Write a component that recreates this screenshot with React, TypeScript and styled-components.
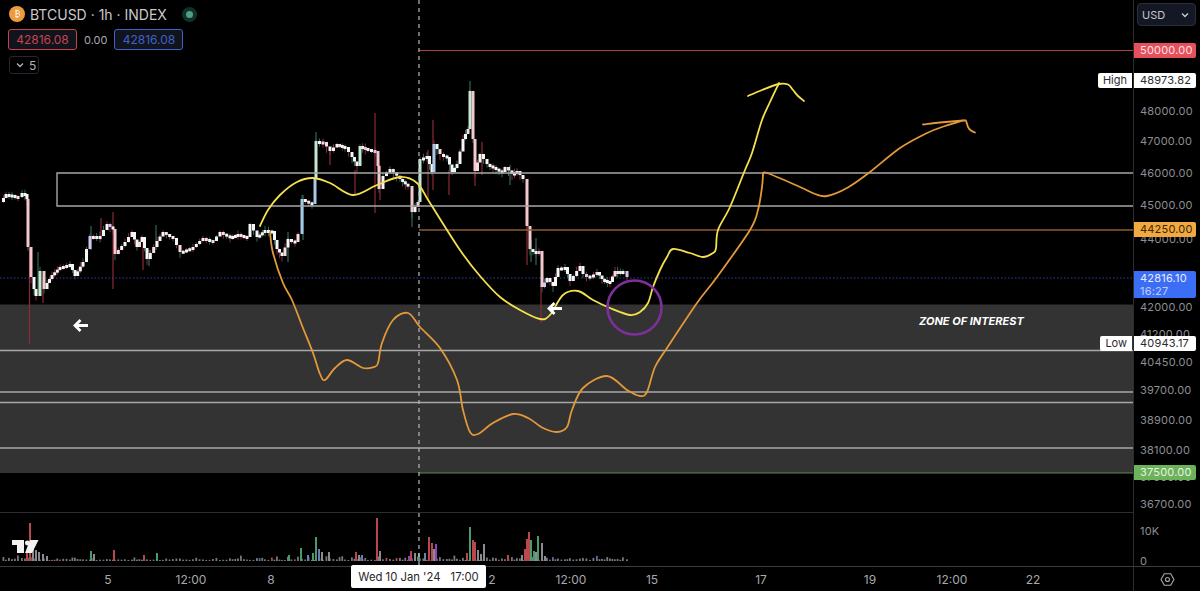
import styled, { createGlobalStyle } from "styled-components";

const CHART_W = 1133;
const MAIN_H = 512;

const GlobalStyle = createGlobalStyle`
  html, body {
    margin: 0;
    padding: 0;
    background: #000;
    overflow: hidden;
  }
  #root {
    width: 1200px;
    height: 591px;
  }
`;

const Screen = styled.div`
  display: flex;
  width: 1200px;
  height: 591px;
  background: #000;
  color: #d1d4dc;
  font-family: Inter, "Liberation Sans", sans-serif;
`;

const ChartColumn = styled.div`
  display: flex;
  flex-direction: column;
  width: ${CHART_W}px;
`;

const MainPane = styled.div`
  position: relative;
  height: ${MAIN_H}px;
  svg {
    display: block;
  }
`;

const VolumePane = styled.div`
  height: 53px;
  border-top: 1px solid #2c2c32;
  svg {
    display: block;
  }
`;

const TimeAxis = styled.div`
  position: relative;
  height: 24px;
  border-top: 1px solid #3a3a40;
`;

const TimeLabel = styled.span`
  position: absolute;
  top: 5px;
  transform: translateX(-50%);
  font-size: 12px;
  line-height: 15px;
  color: #a8a8ac;
  white-space: nowrap;
`;

const TimeTooltip = styled.div`
  position: absolute;
  left: 351px;
  top: -2px;
  width: 135px;
  height: 23px;
  display: flex;
  align-items: center;
  justify-content: center;
  gap: 10px;
  background: #fff;
  border-radius: 2px;
  color: #26262a;
  font-size: 11.3px;
`;

const Legend = styled.div`
  position: absolute;
  left: 8px;
  top: 5px;
  display: flex;
  flex-direction: column;
  align-items: flex-start;
  gap: 6px;
`;

const LegendTitle = styled.div`
  display: flex;
  align-items: center;
  height: 18px;
  font-size: 14px;
  color: #c9c9cc;
  white-space: nowrap;
  svg {
    margin: 0 5px 0 1px;
  }
`;

const StatusDot = styled.span`
  width: 7px;
  height: 7px;
  margin-left: 19px;
  border-radius: 50%;
  background: #4f9f87;
  box-shadow: 0 0 0 4px #10302a;
`;

const ValueRow = styled.div`
  display: flex;
  align-items: center;
  gap: 7px;
`;

const ValueBox = styled.span<{ $tone: string }>`
  display: block;
  box-sizing: border-box;
  width: 69px;
  height: 21px;
  line-height: 19px;
  text-align: center;
  font-size: 12px;
  color: ${p => p.$tone};
  border: 1px solid ${p => p.$tone};
  border-radius: 3px;
  background: #12141d;
`;

const ChangeText = styled.span`
  font-size: 11px;
  color: #a9a9ae;
`;

const CollapseButton = styled.div`
  display: flex;
  align-items: center;
  gap: 4px;
  box-sizing: border-box;
  width: 30px;
  height: 18px;
  margin-left: 1px;
  padding-left: 5px;
  border: 1px solid #26262c;
  border-radius: 3px;
  font-size: 12px;
  color: #b0b0b4;
`;

const ExtremeTag = styled.span`
  position: absolute;
  right: 1px;
  height: 15px;
  padding: 0 5px;
  line-height: 15px;
  font-size: 11px;
  color: #2a2a2e;
  background: #fff;
  border-radius: 2px 0 0 2px;
`;

const ZoneLabel = styled.span`
  position: absolute;
  left: 919px;
  top: 315px;
  font-size: 11px;
  line-height: 13px;
  font-weight: 700;
  font-style: italic;
  color: #fff;
  white-space: nowrap;
`;

const PriceAxis = styled.div`
  position: relative;
  width: 66px;
  border-left: 1px solid #2c2c32;
`;

const CurrencySelect = styled.div`
  position: absolute;
  left: 3px;
  top: 3px;
  box-sizing: border-box;
  display: flex;
  align-items: center;
  justify-content: space-between;
  width: 59px;
  height: 23px;
  padding: 0 5px 0 4px;
  border: 1px solid #2a2e39;
  border-radius: 4px;
  background: #141824;
  font-size: 11px;
  color: #c4c6cc;
`;

const PriceLabel = styled.span`
  position: absolute;
  left: 6px;
  transform: translateY(-50%);
  font-size: 11px;
  line-height: 14px;
  letter-spacing: 0.2px;
  color: #8e8e92;
`;

const PriceBadge = styled.div<{ $bg: string; $fg: string }>`
  position: absolute;
  left: 0;
  box-sizing: border-box;
  width: 62px;
  padding-left: 6px;
  font-size: 11px;
  line-height: 14px;
  letter-spacing: 0.2px;
  color: ${p => p.$fg};
  background: ${p => p.$bg};
  border-radius: 0 2px 2px 0;
`;

const BadgeLine = styled.div<{ $dim?: boolean }>`
  height: 13px;
  line-height: 14px;
  opacity: ${p => (p.$dim ? 0.75 : 1)};
`;

const SettingsButton = styled.div`
  position: absolute;
  left: 0;
  right: 0;
  bottom: 0;
  height: 24px;
  display: flex;
  align-items: center;
  justify-content: center;
  border-top: 1px solid #3a3a40;
`;

type Pt = [number, number];

// price path read off the picture, one point per visible turn
const pricePath: Pt[] = [
  [1, 203], [6, 195], [12, 196], [18, 198], [22, 194], [25, 195], [27, 200], [28, 248], [31, 278], [34, 290], [36, 297],
  [40, 272], [44, 290], [47, 284], [52, 276], [60, 268], [70, 265], [75, 277], [83, 263], [90, 237], [100, 237],
  [107, 225], [113, 230], [115, 255], [125, 243], [132, 233], [137, 248], [142, 238], [147, 260], [157, 242], [163, 233],
  [173, 239], [180, 253], [193, 248], [203, 239], [213, 242], [220, 233], [230, 238], [238, 235], [247, 238], [250, 225],
  [257, 238], [265, 231], [272, 232], [277, 250], [282, 257], [288, 240], [295, 243], [298, 235], [302, 200], [312, 205],
  [315, 180], [316, 142], [323, 143], [330, 152], [337, 145], [345, 148], [352, 158], [357, 167], [360, 147], [368, 150],
  [375, 152], [378, 167], [379, 190], [383, 177], [390, 170], [400, 180], [408, 187], [412, 213], [418, 203], [420, 160],
  [427, 157], [432, 173], [434, 145], [440, 155], [447, 158], [452, 173], [457, 165], [463, 140], [468, 130], [470, 92],
  [473, 140], [475, 172], [480, 155], [487, 165], [493, 168], [502, 173], [505, 168], [512, 175], [517, 172], [523, 180],
  [527, 227], [530, 250], [533, 252], [539, 252], [542, 288], [547, 279], [553, 287], [558, 269], [565, 268], [570, 282],
  [580, 267], [583, 275], [590, 278], [597, 273], [602, 280], [610, 283], [615, 272], [623, 272], [627, 278],
];

const STEP = 3.2;

type Candle = { x: number; open: number; close: number };

// split each stretch of the path into candles, so every turn lands on a candle
const candles: Candle[] = [];
for (let i = 1; i < pricePath.length; i++) {
  const [x0, y0] = pricePath[i - 1];
  const [x1, y1] = pricePath[i];
  const n = Math.max(1, Math.round((x1 - x0) / STEP));
  for (let k = 1; k <= n; k++) {
    candles.push({
      x: x0 + ((x1 - x0) * k) / n,
      open: y0 + ((y1 - y0) * (k - 1)) / n,
      close: y0 + ((y1 - y0) * k) / n,
    });
  }
}

const noise = (i: number) => {
  const v = Math.sin(i * 12.9898) * 43758.5453;
  return v - Math.floor(v);
};

const RED_WICK = "#8c2b36";
const GREEN_WICK = "#2e6b52";

const bigWicks: [number, number, number, string][] = [
  [29.5, 248, 344, RED_WICK], [38, 252, 296, GREEN_WICK], [43, 280, 303, RED_WICK], [113, 212, 289, RED_WICK],
  [101, 218, 240, RED_WICK], [156, 225, 250, GREEN_WICK], [143, 240, 270, RED_WICK], [149, 250, 266, GREEN_WICK],
  [91, 226, 250, GREEN_WICK], [316, 132, 150, GREEN_WICK], [375, 113, 213, RED_WICK], [355, 170, 195, RED_WICK],
  [330, 150, 165, RED_WICK], [412, 205, 227, GREEN_WICK], [433, 120, 190, RED_WICK], [428, 150, 200, RED_WICK],
  [470, 81, 95, GREEN_WICK], [475, 140, 186, RED_WICK], [482, 142, 175, RED_WICK], [449, 170, 195, RED_WICK],
  [541, 285, 323, RED_WICK], [531, 240, 262, GREEN_WICK], [536, 238, 265, GREEN_WICK], [527, 225, 265, RED_WICK],
  [303, 195, 240, GREEN_WICK], [288, 232, 262, GREEN_WICK], [510, 165, 185, GREEN_WICK], [380, 165, 200, RED_WICK],
];

const bodyColor = (c: Candle, i: number) => {
  const move = c.open - c.close;
  if (move > 14) return i % 2 ? "#c4e8d2" : "#a8c8e8";
  if (move < -14) return "#f3c9cd";
  if (noise(i) > 0.95) return "#d9c4ef";
  if (noise(i + 50) > 0.85) return "#f6dcdf";
  return "#f6f6f6";
};

const Candles = () => (
  <g>
    {candles.map((c, i) => {
      const h = 2 + noise(i + 3) * 3.5;
      return (
        <line
          key={i}
          x1={c.x}
          x2={c.x}
          y1={c.close - h}
          y2={c.close + h}
          stroke={noise(i + 7) > 0.5 ? GREEN_WICK : RED_WICK}
          strokeWidth={1}
        />
      );
    })}
    {bigWicks.map(([x, y0, y1, color]) => (
      <line key={`${x}-${y0}`} x1={x} x2={x} y1={y0} y2={y1} stroke={color} strokeWidth={1.2} />
    ))}
    {candles.map((c, i) => (
      <rect
        key={i}
        x={c.x - 1.5}
        y={Math.min(c.open, c.close) - 1}
        width={3}
        height={Math.max(Math.abs(c.open - c.close), 3)}
        fill={bodyColor(c, i)}
      />
    ))}
  </g>
);

// smooth line through hand-drawn points (Catmull-Rom to bezier)
const smoothPath = (pts: Pt[]) => {
  let d = `M${pts[0][0]} ${pts[0][1]}`;
  for (let i = 0; i < pts.length - 1; i++) {
    const p0 = pts[Math.max(0, i - 1)];
    const p1 = pts[i];
    const p2 = pts[i + 1];
    const p3 = pts[Math.min(pts.length - 1, i + 2)];
    const c1x = p1[0] + (p2[0] - p0[0]) / 6;
    const c1y = p1[1] + (p2[1] - p0[1]) / 6;
    const c2x = p2[0] - (p3[0] - p1[0]) / 6;
    const c2y = p2[1] - (p3[1] - p1[1]) / 6;
    d += ` C${c1x.toFixed(1)} ${c1y.toFixed(1)} ${c2x.toFixed(1)} ${c2y.toFixed(1)} ${p2[0]} ${p2[1]}`;
  }
  return d;
};

const yellowCurve = smoothPath([
  [260, 226], [268, 210], [280, 195], [297, 182], [313, 178], [330, 183], [353, 195], [377, 185], [400, 177], [417, 183],
  [430, 203], [460, 250], [480, 276], [500, 297], [520, 310], [540, 319], [550, 315], [563, 295], [578, 291], [593, 300],
  [610, 308], [630, 315], [640, 312], [648, 303], [653, 287], [660, 270], [667, 257], [673, 249], [690, 253], [703, 257],
  [713, 253], [716, 248], [718, 230], [730, 207], [745, 170], [752, 153], [762, 120], [770, 102], [779, 83],
]);

const yellowHead = smoothPath([[748, 96], [762, 90], [779, 84], [788, 84.5], [793, 90], [798, 96], [804, 101]]);

const orangeLeg = smoothPath([
  [270, 232], [273, 253], [283, 283], [292, 300], [303, 328], [313, 353], [320, 374], [325, 380], [335, 368], [347, 360],
  [363, 368], [374, 367], [378, 363], [382, 343], [393, 320], [408, 313], [420, 327], [440, 348], [457, 380], [463, 410],
  [470, 432], [478, 434], [493, 423], [513, 414], [528, 418], [543, 428], [557, 432], [567, 427], [572, 410], [583, 388],
  [607, 376], [627, 390], [640, 396], [647, 392], [655, 367], [667, 348], [697, 303], [717, 277], [750, 230], [758, 210],
  [762, 187], [763, 175],
]);

const orangeRun = smoothPath([
  [763, 175], [767, 173], [800, 187], [815, 194], [827, 196], [847, 188], [870, 172], [900, 148], [927, 133], [945, 126], [963, 120.5],
]);

const orangeHead = smoothPath([[923, 124.5], [940, 122.5], [963, 120.5], [966, 121], [968, 127], [971, 130.5], [975, 132.5]]);

const ArrowLeft = ({ x, y }: { x: number; y: number }) => (
  <path
    d={`M${x + 7} ${y}H${x - 6}M${x - 0.5} ${y - 5.5}L${x - 6} ${y}L${x - 0.5} ${y + 5.5}`}
    fill="none"
    stroke="#fff"
    strokeWidth={2.8}
  />
);

const Crosshair = ({ y2 }: { y2: number }) => (
  <line x1={419} x2={419} y1={0} y2={y2} stroke="#b8b8bc" strokeWidth={1.2} strokeDasharray="4 4" />
);

const ChartDrawing = () => (
  <svg width={CHART_W} height={MAIN_H}>
    <rect x={0} y={304.5} width={CHART_W} height={168.5} fill="#333333" />
    <line x1={0} x2={CHART_W} y1={278} y2={278} stroke="#2f45a0" strokeWidth={1} strokeDasharray="1.5 2" />
    <Candles />
    <path d={`M${CHART_W} 173H57V206H${CHART_W}`} fill="none" stroke="#a6a6a6" strokeWidth={1.4} />
    {[350.5, 392, 402.5, 448].map(y => (
      <line key={y} x1={0} x2={CHART_W} y1={y} y2={y} stroke="#a9a9a9" strokeWidth={1.4} />
    ))}
    <line x1={419} x2={CHART_W} y1={50.5} y2={50.5} stroke="#a8434b" strokeWidth={1.2} />
    <line x1={419} x2={CHART_W} y1={230} y2={230} stroke="#8d5c30" strokeWidth={1.4} />
    <line x1={419} x2={CHART_W} y1={473} y2={473} stroke="#5a8a50" strokeWidth={1.2} />
    <Crosshair y2={MAIN_H} />
    {[orangeLeg, orangeRun, orangeHead].map(d => (
      <path key={d} d={d} fill="none" stroke="#e3983a" strokeWidth={1.8} strokeLinecap="round" />
    ))}
    {[yellowCurve, yellowHead].map(d => (
      <path key={d} d={d} fill="none" stroke="#f4e04d" strokeWidth={1.8} strokeLinecap="round" />
    ))}
    <circle cx={634.5} cy={307.5} r={27} fill="none" stroke="#7d2f9c" strokeWidth={2.6} />
    <ArrowLeft x={81} y={325.5} />
    <ArrowLeft x={555} y={308.5} />
  </svg>
);

const VOL_BASE = 48;

// tall bars read off the picture: x, top in screen px, colour
const volumeSpikes: [number, number, string][] = [
  [29, 523, "#b8484d"], [26, 552, "#b8484d"], [32, 549, "#8a8a90"], [35, 550, "#8a8a90"], [38, 552, "#8a8a90"],
  [42, 554, "#8a8a90"], [46, 556, "#8a8a90"], [90, 551, "#4c9a6a"], [93, 554, "#8a8a90"], [113, 550, "#b8484d"],
  [143, 555, "#b8484d"], [156, 553, "#4c9a6a"], [288, 555, "#4c9a6a"], [300, 548, "#4c9a6a"], [307, 555, "#6a7fb0"],
  [312, 553, "#4c9a6a"], [315, 537, "#4c9a6a"], [318, 549, "#6a7fb0"], [321, 552, "#8a8a90"], [328, 552, "#8a8a90"],
  [355, 552, "#b8484d"], [358, 555, "#8a8a90"], [361, 555, "#6a7fb0"], [376, 518, "#b8484d"], [379, 551, "#8a8a90"],
  [408, 556, "#8b44b0"], [410, 551, "#b8484d"], [414, 553, "#8a8a90"], [418, 553, "#4c9a6a"], [424, 553, "#6a7fb0"],
  [428, 537, "#b8484d"], [431, 543, "#b8484d"], [433, 549, "#8a8a90"], [435, 544, "#8b44b0"], [466, 553, "#b8484d"],
  [469, 527, "#4c9a6a"], [472, 540, "#b8484d"], [474, 542, "#b8484d"], [477, 550, "#8a8a90"], [480, 554, "#8a8a90"],
  [483, 544, "#8a8a90"], [507, 555, "#b8484d"], [521, 555, "#8a8a90"], [524, 549, "#b8484d"], [526, 539, "#b8484d"],
  [528, 532, "#b8484d"], [530, 540, "#4c9a6a"], [533, 551, "#4c9a6a"], [535, 552, "#8a8a90"], [537, 536, "#4c9a6a"],
  [541, 543, "#8a8a90"], [544, 556, "#8a8a90"],
];

const volumeColor = (i: number) => {
  const n = noise(i + 21);
  if (n > 0.95) return "#4c9a6a";
  if (n > 0.9) return "#b8484d";
  if (n > 0.85) return "#5a6fa5";
  return "#77777c";
};

const VolumeDrawing = () => (
  <svg width={CHART_W} height={53}>
    {candles.map((c, i) => {
      const h = 1 + noise(i + 11) * noise(i + 31) * 5;
      return <rect key={i} x={c.x - 1} y={VOL_BASE - h} width={1.8} height={h} fill={volumeColor(i)} />;
    })}
    {volumeSpikes.map(([x, top, color]) => (
      <rect key={x} x={x} y={top - 513} width={2} height={VOL_BASE - (top - 513)} fill={color} />
    ))}
    <Crosshair y2={53} />
    <path d="M12 27H24V40H17V32H12ZM30 27H38.5L32 40H25Z" fill="#f2f2f2" />
    <circle cx={27.3} cy={30} r={2.4} fill="#f2f2f2" />
  </svg>
);

const BitcoinIcon = () => (
  <svg width={16} height={16} viewBox="0 0 16 16">
    <circle cx={8} cy={8} r={8} fill="#ee9a3e" />
    <path
      d="M6.2 4.8h2.6c1 0 1.6.5 1.6 1.4 0 .7-.4 1.2-1 1.3.8.1 1.3.6 1.3 1.4 0 1-.7 1.6-1.8 1.6H6.2M7 4.8v6M7.2 3.8v1M8.6 3.8v1M7.2 10.8v1M8.6 10.8v1M7 7.6h2"
      fill="none"
      stroke="#fff"
      strokeWidth={1}
      opacity={0.85}
    />
  </svg>
);

const Chevron = ({ size, color }: { size: number; color: string }) => (
  <svg width={size} height={size} viewBox="0 0 10 10">
    <path d="M2 3.5L5 6.5L8 3.5" fill="none" stroke={color} strokeWidth={1.4} />
  </svg>
);

const SettingsIcon = () => (
  <svg width={15} height={15} viewBox="0 0 15 15">
    <path d="M4.3 1.8h6.4L14 7.5l-3.3 5.7H4.3L1 7.5Z" fill="none" stroke="#a8a8ac" strokeWidth={1.1} />
    <circle cx={7.5} cy={7.5} r={2} fill="none" stroke="#a8a8ac" strokeWidth={1.1} />
  </svg>
);

const timeLabels: [string, number][] = [
  ["5", 108],
  ["12:00", 191],
  ["8", 271],
  ["2", 492],
  ["12:00", 571],
  ["15", 652],
  ["17", 761],
  ["19", 870],
  ["12:00", 952],
  ["22", 1033],
];

const priceLabels: [string, number][] = [
  ["48000.00", 111],
  ["47000.00", 141],
  ["46000.00", 173],
  ["45000.00", 205],
  ["44000.00", 238.5],
  ["42000.00", 306.5],
  ["41200.00", 334],
  ["40450.00", 362],
  ["39700.00", 389.5],
  ["38900.00", 419.5],
  ["38100.00", 449.5],
  ["37300.00", 477],
  ["36700.00", 504],
  ["10K", 531],
  ["0", 561],
];

const priceBadges: { lines: string[]; top: number; bg: string; fg: string }[] = [
  { lines: ["50000.00"], top: 43, bg: "#e5505c", fg: "#fbe4e6" },
  { lines: ["48973.82"], top: 73, bg: "#ffffff", fg: "#2a2a2e" },
  { lines: ["44250.00"], top: 222, bg: "#f2a93f", fg: "#3a2608" },
  { lines: ["42816.10", "16:27"], top: 271, bg: "#3c6df5", fg: "#e6ecff" },
  { lines: ["40943.17"], top: 336, bg: "#ffffff", fg: "#2a2a2e" },
  { lines: ["37500.00"], top: 465, bg: "#6bb25a", fg: "#e6f4e2" },
];

const App = () => (
  <Screen>
    <GlobalStyle />
    <ChartColumn>
      <MainPane>
        <ChartDrawing />
        <Legend>
          <LegendTitle>
            <BitcoinIcon />
            BTCUSD · 1h · INDEX
            <StatusDot />
          </LegendTitle>
          <ValueRow>
            <ValueBox $tone="#c5444f">42816.08</ValueBox>
            <ChangeText>0.00</ChangeText>
            <ValueBox $tone="#3f62c8">42816.08</ValueBox>
          </ValueRow>
          <CollapseButton>
            <Chevron size={10} color="#b0b0b4" />5
          </CollapseButton>
        </Legend>
        <ExtremeTag style={{ top: 73 }}>High</ExtremeTag>
        <ExtremeTag style={{ top: 336 }}>Low</ExtremeTag>
        <ZoneLabel>ZONE OF INTEREST</ZoneLabel>
      </MainPane>
      <VolumePane>
        <VolumeDrawing />
      </VolumePane>
      <TimeAxis>
        {timeLabels.map(([text, x]) => (
          <TimeLabel key={`${text}-${x}`} style={{ left: x }}>
            {text}
          </TimeLabel>
        ))}
        <TimeTooltip>
          <span>Wed 10 Jan '24</span>
          <span>17:00</span>
        </TimeTooltip>
      </TimeAxis>
    </ChartColumn>
    <PriceAxis>
      <CurrencySelect>
        USD
        <Chevron size={10} color="#c4c6cc" />
      </CurrencySelect>
      {priceLabels.map(([text, y]) => (
        <PriceLabel key={text} style={{ top: y }}>
          {text}
        </PriceLabel>
      ))}
      {priceBadges.map(b => (
        <PriceBadge key={b.lines[0]} $bg={b.bg} $fg={b.fg} style={{ top: b.top, height: b.lines.length > 1 ? 27 : 15 }}>
          {b.lines.map((line, i) => (
            <BadgeLine key={line} $dim={i > 0}>
              {line}
            </BadgeLine>
          ))}
        </PriceBadge>
      ))}
      <SettingsButton>
        <SettingsIcon />
      </SettingsButton>
    </PriceAxis>
  </Screen>
);

export default App;
